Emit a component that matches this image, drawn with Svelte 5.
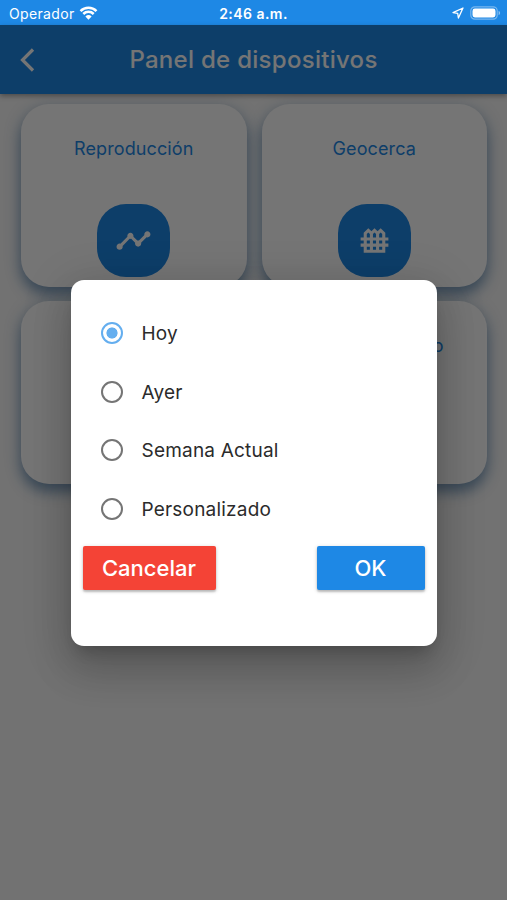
<script lang="ts">
  interface Card {
    title?: string;
    icon?: 'timeline' | 'fence';
  }

  const cards: Card[] = [
    { title: 'Reproducción', icon: 'timeline' },
    { title: 'Geocerca', icon: 'fence' },
    {},
    { title: 'Enviar comando' }
  ];

  const periods = ['Hoy', 'Ayer', 'Semana Actual', 'Personalizado'];

  const icons = {
    timeline:
      'M23 8c0 1.1-.9 2-2 2-.18 0-.35-.02-.51-.07l-3.56 3.55c.05.16.07.34.07.52 0 1.1-.9 2-2 2s-2-.9-2-2c0-.18.02-.36.07-.52l-2.55-2.55c-.16.05-.34.07-.52.07s-.36-.02-.52-.07l-4.55 4.56c.05.16.07.33.07.51 0 1.1-.9 2-2 2s-2-.9-2-2 .9-2 2-2c.18 0 .35.02.51.07l4.56-4.55C8.02 9.36 8 9.18 8 9c0-1.1.9-2 2-2s2 .9 2 2c0 .18-.02.36-.07.52l2.55 2.55c.16-.05.34-.07.52-.07s.36.02.52.07l3.55-3.56C19.02 8.35 19 8.18 19 8c0-1.1.9-2 2-2s2 .9 2 2z',
    fence:
      'M21 12v-2h-2V7l-3-3-2 2-2-2-2 2-2-2-3 3v3H3v2h2v2H3v2h2v4h14v-4h2v-2h-2v-2h2zM16 6.83l1 1V10h-2V7.83l1-1zM12 6.83l1 1V10h-2V7.83l1-1zM11 14v-2h2v2h-2zM13 16v2h-2v-2h2zM7 7.83l1-1 1 1V10H7V7.83zM7 12h2v2H7v-2zM7 16h2v2H7v-2zM17 18h-2v-2h2v2zM17 14h-2v-2h2v2z'
  };

  let selected = $state('Hoy');
</script>

<div class="screen">
  <div class="status">
    <div class="carrier">
      <span>Operador</span>
      <svg class="wifi" viewBox="0 0 18 14">
        <path d="M1 5.1a11.4 11.4 0 0 1 16 0M3.8 8a7.4 7.4 0 0 1 10.4 0" />
        <path class="solid" d="M9 13.7 5.9 10.5a4.5 4.5 0 0 1 6.2 0z" />
      </svg>
    </div>
    <span class="time">2:46 a.m.</span>
    <div class="indicators">
      <svg class="location" viewBox="0 0 12 12">
        <path d="M11 1 1 5.6l4.7.7.7 4.7z" />
      </svg>
      <svg class="battery" viewBox="0 0 31 14">
        <rect class="shell" x=".8" y=".8" width="26.4" height="12.4" rx="4" />
        <rect class="charge" x="2.5" y="2.5" width="23" height="9" rx="2.4" />
        <path class="cap" d="M28.6 4.8c2 .8 2 3.6 0 4.4z" />
      </svg>
    </div>
  </div>

  <header>
    <svg class="back" viewBox="0 0 16 26"><path d="m13 2.5-10.5 10.5 10.5 10.5" /></svg>
    <h1>Panel de dispositivos</h1>
  </header>

  <main>
    {#each cards as card}
      <section class="card">
        {#if card.title}
          <h2>{card.title}</h2>
        {/if}
        {#if card.icon}
          <div class="badge">
            <svg viewBox="0 0 24 24"><path fill-rule="evenodd" d={icons[card.icon]} /></svg>
          </div>
        {/if}
      </section>
    {/each}
  </main>

  <div class="backdrop">
    <div class="dialog" role="dialog" aria-modal="true">
      <div class="options">
        {#each periods as period}
          <label>
            <input type="radio" name="period" value={period} bind:group={selected} />
            <span>{period}</span>
          </label>
        {/each}
      </div>
      <div class="actions">
        <button class="cancel">Cancelar</button>
        <button class="ok">OK</button>
      </div>
    </div>
  </div>
</div>

<style>
  :global(body) {
    margin: 0;
  }

  .screen {
    position: relative;
    display: flex;
    flex-direction: column;
    height: 900px;
    overflow: hidden;
    background: #f8f8f8;
    font-family: Inter, 'Liberation Sans', sans-serif;
  }

  .status {
    box-sizing: border-box;
    display: grid;
    grid-template-columns: 1fr auto 1fr;
    align-items: center;
    flex: 0 0 25px;
    padding: 2px 6px 0 9px;
    background: #1e88e5;
    color: #fff;
    font-size: 14px;
    line-height: 23px;
  }

  .carrier,
  .indicators {
    display: flex;
    align-items: center;
  }

  .carrier {
    gap: 5px;
    letter-spacing: 0.35px;
  }

  .time {
    margin-right: 3px;
    font-weight: 600;
    letter-spacing: 0.45px;
  }

  .indicators {
    justify-content: flex-end;
    gap: 6px;
  }

  .wifi {
    width: 19px;
    height: 14px;
    margin: -1px 0 0 -1px;
    fill: none;
    stroke: #fff;
    stroke-width: 2.5;
  }

  .wifi .solid {
    fill: #fff;
    stroke: none;
  }

  .location {
    width: 12px;
    height: 12px;
    margin-top: -1px;
    fill: none;
    stroke: #fff;
    stroke-width: 1.3;
    stroke-linejoin: round;
  }

  .battery {
    width: 31px;
    height: 14px;
    margin-top: -1px;
    fill: #fff;
  }

  .battery .shell {
    fill: none;
    stroke: #fff;
    stroke-width: 1.2;
    opacity: 0.4;
  }

  .battery .cap {
    opacity: 0.5;
  }

  header {
    position: relative;
    display: grid;
    grid-template-columns: 60px 1fr 60px;
    align-items: center;
    flex: 0 0 69px;
    background: #1e88e5;
    box-shadow: 0 2px 5px rgba(0, 0, 0, 0.35);
  }

  .back {
    width: 16px;
    height: 26px;
    margin-left: 20px;
    fill: none;
    stroke: #fff;
    stroke-width: 3.2;
  }

  h1 {
    margin: 0;
    color: #fff;
    font-size: 24px;
    font-weight: 500;
    line-height: 30px;
    letter-spacing: 0.28px;
    text-align: center;
    white-space: nowrap;
  }

  main {
    display: grid;
    grid-template-columns: 1fr 1fr;
    grid-auto-rows: 183px;
    gap: 14.5px 15px;
    padding: 9.5px 20px 0 21px;
  }

  .card {
    display: flex;
    flex-direction: column;
    align-items: center;
    border-radius: 28px;
    background: #fff;
    box-shadow:
      0 8px 13px rgba(40, 95, 150, 0.5),
      0 3px 18px rgba(40, 95, 150, 0.22);
  }

  h2 {
    margin: 33px 0 0;
    color: #1e88e5;
    font-size: 18px;
    font-weight: 400;
    line-height: 24px;
    letter-spacing: 0.12px;
  }

  .badge {
    display: flex;
    align-items: center;
    justify-content: center;
    width: 73px;
    height: 73px;
    margin-top: 43px;
    border-radius: 29px;
    background: #1e88e5;
  }

  .badge svg {
    width: 37px;
    height: 37px;
    fill: #fff;
  }

  /* Covers everything under the status bar */
  .backdrop {
    position: absolute;
    inset: 25px 0 0;
    display: flex;
    align-items: center;
    justify-content: center;
    background: rgba(0, 0, 0, 0.54);
  }

  .dialog {
    box-sizing: border-box;
    width: 366px;
    height: 366px;
    padding: 24.5px 12px 23px;
    border-radius: 13px;
    background: #fff;
    box-shadow:
      0 11px 15px -7px rgba(0, 0, 0, 0.2),
      0 24px 38px 3px rgba(0, 0, 0, 0.14),
      0 9px 46px 8px rgba(0, 0, 0, 0.12);
  }

  label {
    display: flex;
    align-items: center;
    gap: 19px;
    height: 58.6px;
    padding-left: 18px;
    color: #2b2b2b;
    font-size: 19px;
    letter-spacing: 0.2px;
  }

  label span {
    padding-top: 1px;
  }

  input {
    appearance: none;
    box-sizing: border-box;
    width: 22px;
    height: 22px;
    margin: 0;
    border: 2.4px solid #757575;
    border-radius: 50%;
  }

  input:checked {
    border-color: #64aeef;
    background: radial-gradient(circle, #64aeef 5.2px, transparent 5.9px);
  }

  .actions {
    display: flex;
    justify-content: space-between;
    margin-top: 7.5px;
  }

  button {
    height: 44px;
    padding: 0;
    border: 0;
    border-radius: 2px;
    color: #fff;
    font: 500 22px Inter, 'Liberation Sans', sans-serif;
    box-shadow:
      0 2px 2px rgba(0, 0, 0, 0.18),
      0 1px 4px rgba(0, 0, 0, 0.18);
  }

  .cancel {
    width: 133px;
    background: #f44336;
  }

  .ok {
    width: 108px;
    background: #1e88e5;
  }
</style>
